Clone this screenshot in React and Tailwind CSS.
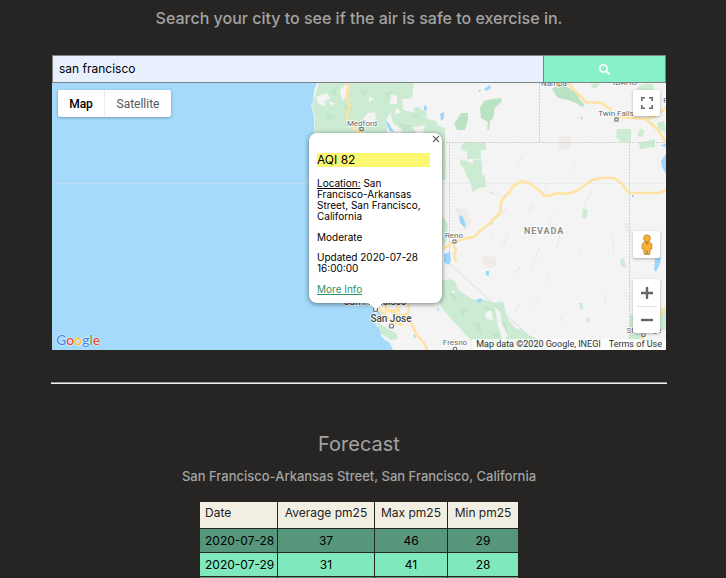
import { FaSearch } from "react-icons/fa";

const forecast = [
  { date: "2020-07-28", avg: 37, max: 46, min: 29, tone: "bg-[#56967b]" },
  { date: "2020-07-29", avg: 31, max: 41, min: 28, tone: "bg-[#80e8bd]" },
];

function Terrain() {
  return (
    <svg
      className="absolute inset-0 h-full w-full"
      viewBox="52 83 614 267"
      preserveAspectRatio="xMidYMid slice"
      role="img"
      aria-label="Map of the western United States"
    >
      <rect x="-400" y="-100" width="1500" height="700" fill="#a5dafb" />
      <path
        d="M317 60 L317 83 L314 90 L313 102 L311 105 L314 116 L314 130 L320 160 L330 230 L360 290 L371 302 L375 308 L374 317 L376 325 L381 331 L381 336 L385 340 L390 343 L393 350 L396 400 L1100 400 L1100 60 Z"
        fill="#f4f4f4"
      />
      {/* forests of the Pacific coast */}
      <g fill="#cbebd3">
        <path d="M319 83 L414 83 L412 98 L402 99 L403 110 L418 107 L426 112 L427 119 L436 121 L439 126 L445 128 L446 180 L312 180 L315 116 L312 106 L316 92 Z" />
        <path d="M443 129 L446 166 L443 178 Z M442 216 L448 224 L446 242 L442 248 Z" />
        <path d="M461 146 L465 142 H486 V150 H481 V159 H467 V152 L461 149 Z" />
        <path d="M460 159 L467 161 L473 164 V159 L482 161 L482 174 L485 176 L486 187 L479 188 L472 192 L471 184 L466 174 L464 168 L460 165 Z" />
        <path d="M486 190 L492 194 L500 195 L493 193 Z" />
        <path d="M439 284 L449 279 L455 281 L458 290 L466 295 L474 300 L483 299 L494 303 L503 301 L506 313 L509 321 L514 327 L523 331 L530 336 L543 341 L548 350 L495 350 L481 347 L472 341 L465 334 L456 324 L448 315 L443 310 L439 302 Z" />
        <path d="M376 321 L380 324 L392 331 L397 334 L397 339 L391 340 L386 337 L381 334 Z" />
        <path d="M396 291 L405 295 L407 302 L398 302 Z" />
        <path d="M617 129 H631 V142 H621 L616 137 Z M640 128 L645 131 L642 137 L637 136 Z M639 143 L655 139 V147 L640 149 Z M657 123 L664 121 L666 132 L659 130 Z" />
        <path d="M583 208 L588 210 L586 219 L582 217 Z M620 260 L624 258 L626 268 L621 267 Z M579 303 H583 V309 H580 Z M586 318 H589 V322 H586 Z M630 314 L643 319 V340 H630 Z M652 312 L666 307 V329 L653 334 Z" />
        <path d="M591 84 L600 83 L597 88 L592 88 Z M632 93 L642 84 H653 V94 Z M490 221 L494 223 L491 226 Z" />
      </g>
      <g fill="#b9e3c3">
        <path d="M552 89 L560 84 L566 86 L576 93 L580 100 L585 105 L582 107 L576 103 L568 100 L558 98 Z" />
        <path d="M480 108 L484 101 L493 99 L501 98 L502 101 L495 108 L493 118 L490 121 L489 130 L487 129 L488 122 L481 118 Z" />
        <path d="M454 124 L461 113 L468 113 L468 120 L465 130 L457 130 Z" />
        <path d="M330 91 l7 -4 l-2 9 z M343 104 l11 4 l-8 5 z M325 112 l10 5 l-6 5 z M360 90 l8 1 l-5 6 z M383 93 l10 -3 l-4 8 z M411 113 l9 1 l-6 6 z M398 123 l16 3 l-9 4 z" opacity=".55" />
        <path d="M450 292 l8 6 l-4 5 z M460 307 l9 1 l-6 8 z M471 321 l9 4 l3 10 z M484 306 l9 4 l-4 5 z M488 331 l10 3 l2 7 z M501 320 l5 3 l2 13 z" opacity=".6" />
      </g>
      <g fill="#f4f4f4">
        <path d="M316 97 L327 93 L330 98 L324 102 L326 106 L318 104 Z" />
        <path d="M340 90 L346 84 L350 88 L346 96 L343 101 L341 95 Z" />
        <path d="M363 119 L368 113 L375 112 L376 119 L371 124 Z" />
        <path d="M391 94 L397 96 L397 104 L390 104 Z M404 106 L413 106 L414 112 L405 111 Z M396 108 L402 112 L395 114 Z" />
        <path d="M386 121 L390 112 L393 123 L402 130 L400 135 L387 133 Z M413 127 L425 125 L423 133 L416 133 Z" />
        <path d="M329 101 l6 2 l-4 3 z M369 96 l5 3 l-5 3 z" />
        <path d="M485 313 L491 310 L493 320 L486 319 Z M495 307 L500 312 L502 324 L508 336 L503 341 L498 326 Z M451 292 l3 -2 l2 4 z" />
      </g>
      {/* bare ground */}
      <g fill="#efebe8">
        <path d="M559 136 H571 V149 H559 Z M455 208 L466 209 L471 222 L467 230 L460 222 Z M483 256 L496 257 L496 266 L489 268 L481 262 Z M624 223 L630 222 L632 231 L626 233 Z" />
      </g>
      {/* valley relief */}
      <g fill="none" stroke="#e9e9e9" strokeWidth="1.200" strokeLinecap="round">
        <path d="M539 248 L536 258 L532 265 L531 272 M587 200 L591 192 M584 207 L586 202 M610 236 L614 245 L613 252 M560 235 L557 248 M503 245 L508 234 M519 163 L522 156 M553 215 L550 220 M502 213 L506 209 M575 163 L571 170 M625 291 L627 298 M537 300 L534 306 M607 295 L604 302 M515 273 L520 267 M596 181 L599 176 M547 184 L545 189 M529 212 L532 205 M490 240 L494 234 M549 275 L546 282 M560 322 L564 315 M515 312 L519 304 M579 253 L582 248" />
      </g>
      {/* lakes and rivers */}
      <g fill="#9bd6fb">
        <path d="M459 215 L463 217 L466 225 L465 228 L460 223 Z" />
        <path d="M444 254 L450 252 L451 261 L448 265 L444 262 Z" />
        <path d="M484 89 L490 85 L491 88 L486 91 Z M478 91 l3 -2 l-1 3 z M440 114 L444 112 L444 118 L441 121 Z M424 105 l3 2 l-1 5 l-2 -2 z" />
        <path d="M386 120 L390 125 L394 132 L390 131 L387 126 Z M580 117 l3 1 l-1 2 z M632 195 l2 0 v2 h-2 z" />
        <path d="M486 271 L489 271 L489 276 L486 275 Z M476 300 L481 298 L482 301 L478 303 Z M446 279 l-5 2 v2 z" />
        <path d="M661 161 L666 154 V174 L662 167 Z M655 259 L661 257 L660 264 L656 272 L654 270 Z M661 146 l5 -3 v4 z" />
        <path d="M377 309 L381 314 L385 321 L382 321 L378 317 L376 311 Z M380 304 h9 l-3 3 z M413 334 l3 2 l-1 3 z M437 307 l2 2 l-1 3 z" />
      </g>
      {/* state borders */}
      <g fill="none" stroke="#d0d0d0" strokeWidth="1" strokeDasharray="2 1">
        <path d="M443 142.500 H666 M539.500 83 V142 M449.500 142 V253 M629.500 142 V340 M449 263 L541 347 M640 340 H666" />
      </g>
      <path d="M52 183.500 H666" stroke="#d8e4ea" strokeWidth="1" opacity=".45" />
      {/* highways */}
      <g fill="none" stroke="#fee3a3" strokeWidth="2.600" strokeLinejoin="round" strokeLinecap="round">
        <path d="M348 83 L347 98 L350 106 L347 113 L347 122 L356 130 L365 135" />
        <path d="M444 248 L453 243 L462 239 L474 237 L481 230 L489 224 L500 213 L501 202 L505 196 L509 193 L513 186 L522 181 L531 184 L540 191 L545 196 L551 195 L558 193 L567 194 L576 191 L584 186 L592 180 L602 178 L614 178 L621 183 L629 193 L659 193 L666 190" />
        <path d="M454 246 L456 250 L454 256 L456 261" />
        <path d="M568 83 L575 91 L586 102 L602 103 L610 109 L617 117 L646 119 L655 116 L666 108 M646 119 L659 131 L666 142" />
        <path d="M377 304 L380 310 L390 320 L402 325 M397 303 L399 311 L388 310 L402 317 M386 305 L386 312 M409 304 L408 314 L393 317 M399 318 L411 322 L416 334 L424 343 L427 350 M640 340 L654 322 L666 307" />
      </g>
      {/* towns */}
      <g fill="#fff" stroke="#777" strokeWidth="1.200">
        <rect x="360" y="127.500" width="3" height="3" />
        <circle cx="454.500" cy="241.500" r="1.700" />
        <circle cx="375.500" cy="309.500" r="2" />
        <circle cx="391.500" cy="326" r="2" />
        <circle cx="455" cy="349" r="1.700" />
        <rect x="615" y="118" width="3" height="3" />
        <circle cx="643.500" cy="335" r="1.700" />
      </g>
      <g
        className="font-['Roboto',sans-serif]"
        fill="#666"
        stroke="#fff"
        strokeWidth="1.500"
        paintOrder="stroke"
        textAnchor="middle"
        fontSize="8"
      >
        <text x="362" y="126">Medford</text>
        <text x="454" y="238">Reno</text>
        <text x="455" y="345">Fresno</text>
        <text x="616" y="116">Twin Falls</text>
        <text x="554" y="86">Nampa</text>
        <text x="625" y="85">IDAHO</text>
        <text x="668" y="103">Po</text>
        <text x="644" y="333">St George</text>
        <g fill="#444" fontSize="10" fontWeight="500">
          <text x="375" y="305">San Francisco</text>
          <text x="391" y="322">San Jose</text>
        </g>
        <text x="544" y="234" fill="#8c8c8c" fontSize="9" fontWeight="700" className="tracking-widest">NEVADA</text>
      </g>
    </svg>
  );
}

function Pegman() {
  return (
    <svg className="h-6 w-4" viewBox="0 0 16 24" aria-hidden="true">
      <path d="M5.500 9 H10.500 L12.800 11 V16 H11.300 L10.600 21.500 H8.500 V18 H7.500 V21.500 H5.400 L4.700 16 H3.200 V11 Z" fill="#fbb034" stroke="#a98039" strokeWidth=".8" />
      <circle cx="8" cy="5.300" r="3.400" fill="#fbb034" stroke="#a98039" strokeWidth=".8" />
      <path d="M5.800 9.300 H10.200 L8 12.300 Z" fill="#e57d2e" />
    </svg>
  );
}

function InfoWindow() {
  return (
    <section
      aria-label="Air quality"
      className="absolute left-[calc(50%-50px)] top-[50px] h-[170px] w-[133px] rounded-lg bg-white px-2 pt-5 font-['Inter',sans-serif] text-[10px] leading-[11px] text-black shadow-[0_1px_5px_rgba(0,0,0,0.5)]"
    >
      <button type="button" aria-label="Close" className="absolute right-0.5 top-0.5 flex h-2 w-2 items-center justify-center">
        <svg className="h-2 w-2" viewBox="0 0 8 8" fill="none" stroke="#666" strokeWidth="1.200" aria-hidden="true">
          <path d="M1 1 L7 7 M7 1 L1 7" />
        </svg>
      </button>
      <h2 className="mr-1 bg-[#fbf770] text-xs leading-[14px]">AQI 82</h2>
      <p className="mt-[11px]">
        <span className="underline">Location:</span> San
        <br />
        Francisco-Arkansas
        <br />
        Street, San Francisco,
        <br />
        California
      </p>
      <p className="mt-2.5">Moderate</p>
      <p className="mt-[9px]">
        Updated 2020-07-28
        <br />
        16:00:00
      </p>
      <p className="mt-2.5">
        <a href="#info" className="text-[#2f9469] underline">More Info</a>
      </p>
      <svg className="absolute left-[58px] top-full h-2 w-4" viewBox="0 0 16 8" aria-hidden="true">
        <path d="M1 0 H16 L9 6 Z" fill="#fff" />
      </svg>
    </section>
  );
}

function MapPanel() {
  return (
    <div className="relative h-[267px] overflow-hidden font-['Roboto',sans-serif]">
      <Terrain />
      <div className="absolute inset-0 flex justify-between px-1.5 pt-[7px]">
        <div className="flex h-[27px] rounded-xs bg-white text-xs shadow-[0_1px_3px_rgba(0,0,0,0.3)]">
          <button type="button" className="w-[47px] border-r border-[#ececec] font-medium text-black">Map</button>
          <button type="button" className="w-[66px] text-[#565656]">Satellite</button>
        </div>
        <div className="flex flex-col">
          <button type="button" aria-label="Full screen" className="flex h-[26px] w-[27px] items-center justify-center rounded-xs bg-white shadow-[0_1px_3px_rgba(0,0,0,0.3)]">
            <svg className="h-3 w-3" viewBox="0 0 12 12" fill="none" stroke="#666" strokeWidth="1.600" aria-hidden="true">
              <path d="M.8 4 V.8 H4 M8 .8 H11.200 V4 M11.200 8 V11.200 H8 M4 11.200 H.8 V8" />
            </svg>
          </button>
          <button type="button" aria-label="Street view" className="mt-[115px] flex h-[27px] w-[27px] items-center justify-center rounded-xs bg-white shadow-[0_1px_3px_rgba(0,0,0,0.3)]">
            <Pegman />
          </button>
          <div className="mt-[21px] flex h-[54px] w-[27px] flex-col items-center rounded-xs bg-white shadow-[0_1px_3px_rgba(0,0,0,0.3)]">
            <button type="button" aria-label="Zoom in" className="flex h-[27px] w-full items-center justify-center">
              <svg className="h-3 w-3" viewBox="0 0 12 12" stroke="#666" strokeWidth="2.400" aria-hidden="true">
                <path d="M6 0 V12 M0 6 H12" />
              </svg>
            </button>
            <div className="h-px w-5 bg-[#e4e4e4]" />
            <button type="button" aria-label="Zoom out" className="flex h-[26px] w-full items-center justify-center">
              <svg className="h-3 w-3" viewBox="0 0 12 12" stroke="#666" strokeWidth="2.400" aria-hidden="true">
                <path d="M0 6 H12" />
              </svg>
            </button>
          </div>
        </div>
      </div>
      <InfoWindow />
      <div className="absolute inset-x-0 bottom-0 flex items-end justify-between">
        <a
          href="#google"
          aria-label="Google"
          className="pl-1 font-['Lato',sans-serif] text-sm leading-5 font-medium text-[#4285f4] [text-shadow:0_0_2px_#fff,0_0_1px_#fff]"
        >
          G<span className="text-[#ea4335]">o</span>
          <span className="text-[#fbbc05]">o</span>g<span className="text-[#34a853]">l</span>
          <span className="text-[#ea4335]">e</span>
        </a>
        <div className="flex gap-2 bg-white/70 px-1 text-[9px] leading-[11px] text-[#333]">
          <span>Map data ©2020 Google, INEGI</span>
          <a href="#terms">Terms of Use</a>
        </div>
      </div>
    </div>
  );
}

export default function App() {
  return (
    <main className="max-h-screen min-h-screen overflow-hidden bg-[#262524] pl-[52px] pr-[60px] font-['Inter',sans-serif] text-[#a3a3a3]">
      <h1 className="pt-2 text-center text-base leading-5 font-medium">
        Search your city to see if the air is safe to exercise in.
      </h1>
      <form className="mt-[27px] flex h-7 border border-[#808080]" onSubmit={(e) => e.preventDefault()}>
        <input
          type="text"
          aria-label="City"
          defaultValue="san francisco"
          className="min-w-0 flex-1 bg-[#e8f0fe] px-1.5 text-xs text-black outline-none"
        />
        <button type="submit" aria-label="Search" className="flex w-[20%] items-center justify-center border-l border-[#808080] bg-[#87f2c9] text-white">
          <FaSearch className="h-[11px] w-[11px]" />
        </button>
      </form>
      <MapPanel />
      <hr className="-mx-px mt-8 border-t border-b border-t-[#9a9a9a] border-b-[#eeeeee]" />
      <h2 className="mt-12 text-center text-xl leading-6">Forecast</h2>
      <h3 className="mt-3 text-center text-[13px] leading-4 font-medium">
        San Francisco-Arkansas Street, San Francisco, California
      </h3>
      <table className="mx-auto mt-[17px] w-[320px] table-fixed border-separate border-spacing-px text-xs leading-3 text-black">
        <colgroup>
          <col className="w-[77px]" />
          <col className="w-[96px]" />
          <col className="w-[72px]" />
          <col />
        </colgroup>
        <thead>
          <tr className="h-[26px] bg-[#f2efe2] text-[#222]">
            <th className="px-[5px] pb-1 text-left font-normal">Date</th>
            <th className="pb-1 font-normal whitespace-nowrap">Average pm25</th>
            <th className="pb-1 font-normal whitespace-nowrap">Max pm25</th>
            <th className="pb-1 font-normal whitespace-nowrap">Min pm25</th>
          </tr>
        </thead>
        <tbody>
          {forecast.map((day) => (
            <tr key={day.date} className={`h-[23px] text-center ${day.tone}`}>
              <td className="px-[5px] text-left whitespace-nowrap">{day.date}</td>
              <td>{day.avg}</td>
              <td>{day.max}</td>
              <td>{day.min}</td>
            </tr>
          ))}
          <tr className="h-[23px] bg-[#56967b]">
            <td />
            <td />
            <td />
            <td />
          </tr>
        </tbody>
      </table>
    </main>
  );
}
